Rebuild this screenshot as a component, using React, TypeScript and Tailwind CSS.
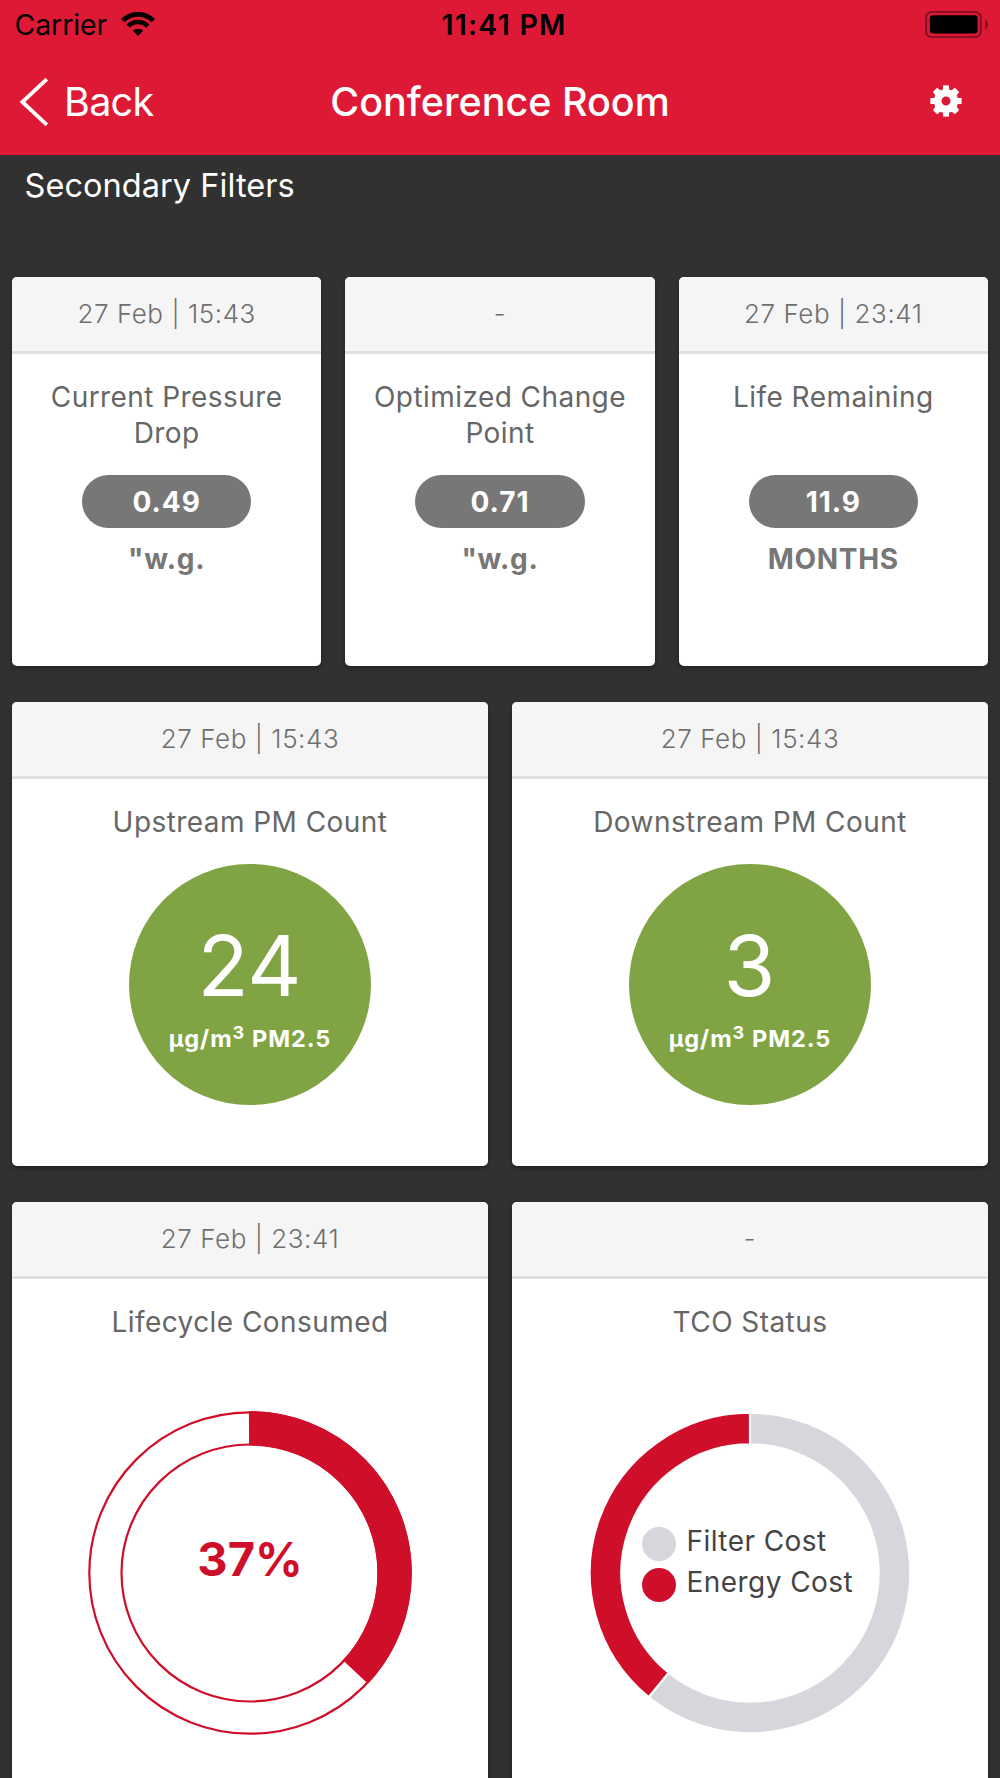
import type { ReactNode } from "react";

const RED = "#cf0f2a";
const GREY = "#d6d7dc";

function WifiIcon() {
  return (
    <svg className="ml-[13px] mt-[-2px] h-[25px] w-[36px]" viewBox="0 0 36 25" fill="none" stroke="#000">
      <path d="M2.66 8.66A21.7 21.7 0 0 1 33.34 8.66" strokeWidth="4.7" />
      <path d="M8.1 14.1A14 14 0 0 1 27.9 14.1" strokeWidth="4.7" />
      <path d="M12.84 18.84A7.3 7.3 0 0 1 23.16 18.84L18 24Z" fill="#000" stroke="none" />
    </svg>
  );
}

function BatteryIcon() {
  return (
    <svg className="-mt-[2px] h-[27px] w-[64px]" viewBox="0 0 64 27">
      <rect x="1" y="1" width="54.8" height="25" rx="5.5" fill="none" stroke="#8c0f22" strokeWidth="2.2" />
      <rect x="4.8" y="4.2" width="47.8" height="18.4" rx="3" fill="#000" />
      <path d="M60 8c2 .8 3.2 2.8 3.2 5.2s-1.2 4.4-3.2 5.2z" fill="#8c0f22" />
    </svg>
  );
}

function GearIcon() {
  return (
    <svg className="-mt-[4px] h-[32px] w-[32px]" viewBox="-16 -16 32 32" fill="#fff">
      <circle r="8.3" fill="none" stroke="#fff" strokeWidth="7.6" />
      {[0, 90, 180, 270].map((a) => (
        <path key={a} transform={`rotate(${a})`} d="M-3-15.6H3V-10H-3Z" />
      ))}
      {[45, 135, 225, 315].map((a) => (
        <path key={a} transform={`rotate(${a})`} d="M-3-15.6H3L3.8-10H-3.8Z" />
      ))}
    </svg>
  );
}

function Card({ date, title, height, children }: { date: string; title: string; height: string; children: ReactNode }) {
  return (
    <section className={`flex min-w-0 flex-1 flex-col items-center overflow-hidden rounded-[5px] bg-white shadow-[0_2px_4px_rgba(0,0,0,0.35)] ${height}`}>
      <header className="flex h-[77px] w-full shrink-0 items-center justify-center border-b-[3px] border-[#e0e0e0] bg-[#f5f5f5] text-[26px] font-light tracking-[0.56px] text-[#6f6f6f]">
        {date}
      </header>
      <h2 className="mt-[25.5px] w-full px-6 text-center text-[28px] leading-9 tracking-[0.44px] text-[#666]">{title}</h2>
      {children}
    </section>
  );
}

function Metric({ value, unit, spacer }: { value: string; unit: string; spacer?: boolean }) {
  return (
    <>
      {spacer && <div className="h-9 shrink-0" />}
      <div className="mt-[23.5px] flex h-[53.3px] w-[169.3px] items-center justify-center rounded-full bg-[#777] text-[28px] font-bold tracking-[1px] text-white">
        {value}
      </div>
      <div className="mt-[13px] text-[28px] font-bold leading-9 tracking-[0.7px] text-[#777]">{unit}</div>
    </>
  );
}

function ParticleCount({ value }: { value: string }) {
  return (
    <div className="mt-[23.5px] flex h-[241.3px] w-[241.3px] flex-col items-center rounded-full bg-[#80a443] pt-[60px] text-white">
      <div className="-ml-px text-[84px] leading-[84px]">{value}</div>
      <div className="mt-[16px] flex text-[23.5px] font-bold leading-[30px] tracking-[0.9px]">
        <span>µg/m</span>
        <span className="-translate-y-[6.5px] text-[18px] tracking-normal">3</span>
        <span className="ml-[8px]">PM2.5</span>
      </div>
    </div>
  );
}

// Point on a circle, with the angle measured clockwise from twelve o'clock.
function polar(r: number, degrees: number) {
  const a = (degrees * Math.PI) / 180;
  return `${(r * Math.sin(a)).toFixed(3)} ${(-r * Math.cos(a)).toFixed(3)}`;
}

function sector(outer: number, inner: number, from: number, to: number) {
  const large = to - from > 180 ? 1 : 0;
  return `M${polar(outer, from)}A${outer} ${outer} 0 ${large} 1 ${polar(outer, to)}L${polar(inner, to)}A${inner} ${inner} 0 ${large} 0 ${polar(inner, from)}Z`;
}

function LifecycleRing() {
  return (
    <div className="relative mt-[67.5px] h-[330px] w-[330px] shrink-0">
      <svg className="h-full w-full" viewBox="-165 -165 330 330">
        <circle r="160.7" fill="none" stroke={RED} strokeWidth="2.2" />
        <circle r="128.5" fill="none" stroke={RED} strokeWidth="2.2" />
        <path d={sector(161.8, 127.5, -0.4, 133.2)} fill={RED} />
      </svg>
      <div className="absolute inset-x-0 top-[127.5px] text-center text-[47px] font-bold leading-[48px] text-[#cf0f2a]">37%</div>
    </div>
  );
}

function LegendRow({ dot, label }: { dot: string; label: string }) {
  return (
    <div className="flex h-[41px] items-center">
      <span className={`mt-[3.5px] h-[34px] w-[34px] rounded-full ${dot}`} />
      <span className="ml-[11px] text-[28px] leading-[41px] tracking-[0.44px] text-[#444]">{label}</span>
    </div>
  );
}

function CostRing() {
  return (
    <div className="relative mt-[67.5px] h-[330px] w-[330px] shrink-0">
      <svg className="h-full w-full" viewBox="-165 -165 330 330" stroke="#fff" strokeWidth="2.2">
        <path d={sector(160.3, 128.6, 0, 219.2)} fill={GREY} />
        <path d={sector(160.3, 128.6, 219.2, 360)} fill={RED} />
      </svg>
      <div className="absolute left-[56.5px] top-[113.5px]">
        <LegendRow dot="bg-[#d6d7dc]" label="Filter Cost" />
        <LegendRow dot="bg-[#cf0f2a]" label="Energy Cost" />
      </div>
    </div>
  );
}

export default function App() {
  return (
    <div className="flex h-[1778px] w-[1000px] flex-col overflow-hidden bg-[#313131] font-['Inter',sans-serif]">
      <div className="h-[154.67px] shrink-0 bg-[#de1935]">
        <div className="grid h-[51px] grid-cols-[1fr_auto_1fr] items-center pl-[14.5px] pr-[11.5px] text-[28.5px] text-black">
          <div className="flex items-center">
            <span className="tracking-[-0.1px]">Carrier</span>
            <WifiIcon />
          </div>
          <span className="ml-[5px] font-semibold tracking-[1.26px]">11:41 PM</span>
          <div className="flex justify-end">
            <BatteryIcon />
          </div>
        </div>
        <nav className="grid h-[103.2px] grid-cols-[1fr_auto_1fr] items-center px-[19px] text-[39.5px] text-white">
          <div className="flex items-center">
            <svg className="-mt-px h-[48px] w-[30px]" viewBox="0 0 30 48" fill="none" stroke="#fff" strokeWidth="3.8">
              <path d="M27.8 1.2L3.4 24L27.8 46.8" />
            </svg>
            <span className="ml-[15px] tracking-[-0.7px]">Back</span>
          </div>
          <h1 className="font-medium">Conference Room</h1>
          <div className="flex justify-end pr-[19px]">
            <GearIcon />
          </div>
        </nav>
      </div>
      <div className="shrink-0 pl-[24.5px] text-[32.5px] leading-[61px] tracking-[0.05px] text-white">Secondary Filters</div>
      <main className="mt-[61.33px] flex shrink-0 flex-col gap-9 px-3">
        <div className="flex gap-6">
          <Card date="27 Feb | 15:43" title="Current Pressure Drop" height="h-[389px]">
            <Metric value="0.49" unit={'"w.g.'} />
          </Card>
          <Card date="-" title="Optimized Change Point" height="h-[389px]">
            <Metric value="0.71" unit={'"w.g.'} />
          </Card>
          <Card date="27 Feb | 23:41" title="Life Remaining" height="h-[389px]">
            <Metric value="11.9" unit="MONTHS" spacer />
          </Card>
        </div>
        <div className="flex gap-6">
          <Card date="27 Feb | 15:43" title="Upstream PM Count" height="h-[464px]">
            <ParticleCount value="24" />
          </Card>
          <Card date="27 Feb | 15:43" title="Downstream PM Count" height="h-[464px]">
            <ParticleCount value="3" />
          </Card>
        </div>
        <div className="flex gap-6">
          <Card date="27 Feb | 23:41" title="Lifecycle Consumed" height="h-[620px]">
            <LifecycleRing />
          </Card>
          <Card date="-" title="TCO Status" height="h-[620px]">
            <CostRing />
          </Card>
        </div>
      </main>
    </div>
  );
}
